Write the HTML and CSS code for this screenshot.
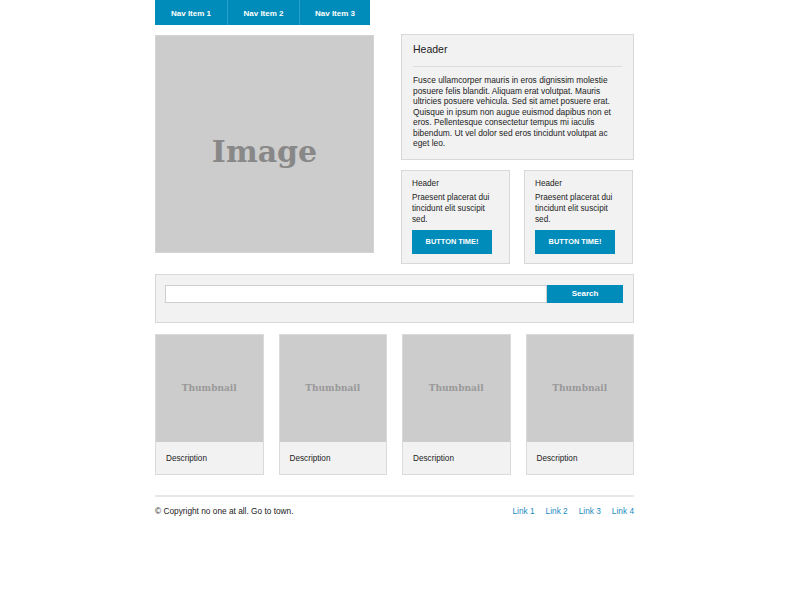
FILE: index.html
```html
<!DOCTYPE html>
<html>
<head>
<meta charset="utf-8">
<link rel="stylesheet" href="styles.css">
</head>
<body>
<div class="page">
  <nav class="nav">
    <a class="nav-item">Nav Item 1</a>
    <a class="nav-item">Nav Item 2</a>
    <a class="nav-item">Nav Item 3</a>
  </nav>

  <div class="top-row">
    <div class="hero"><span>Image</span></div>
    <div class="side">
      <div class="panel main-panel">
        <h2 class="panel-title">Header</h2>
        <hr class="panel-rule">
        <p class="panel-text">Fusce ullamcorper mauris in eros dignissim molestie posuere felis blandit. Aliquam erat volutpat. Mauris ultricies posuere vehicula. Sed sit amet posuere erat. Quisque in ipsum non augue euismod dapibus non et eros. Pellentesque consectetur tempus mi iaculis bibendum. Ut vel dolor sed eros tincidunt volutpat ac eget leo.</p>
      </div>
      <div class="cards">
        <div class="panel card">
          <h3 class="card-title">Header</h3>
          <p class="card-text">Praesent placerat dui tincidunt elit suscipit sed.</p>
          <a class="btn">BUTTON TIME!</a>
        </div>
        <div class="panel card">
          <h3 class="card-title">Header</h3>
          <p class="card-text">Praesent placerat dui tincidunt elit suscipit sed.</p>
          <a class="btn">BUTTON TIME!</a>
        </div>
      </div>
    </div>
  </div>

  <div class="panel search">
    <div class="search-field"></div>
    <a class="search-btn">Search</a>
  </div>

  <div class="thumbs">
    <div class="thumb"><div class="thumb-img"><span>Thumbnail</span></div><div class="thumb-desc">Description</div></div>
    <div class="thumb"><div class="thumb-img"><span>Thumbnail</span></div><div class="thumb-desc">Description</div></div>
    <div class="thumb"><div class="thumb-img"><span>Thumbnail</span></div><div class="thumb-desc">Description</div></div>
    <div class="thumb"><div class="thumb-img"><span>Thumbnail</span></div><div class="thumb-desc">Description</div></div>
  </div>

  <footer class="footer">
    <span class="copy">© Copyright no one at all. Go to town.</span>
    <div class="links">
      <a class="link">Link 1</a>
      <a class="link">Link 2</a>
      <a class="link">Link 3</a>
      <a class="link">Link 4</a>
    </div>
  </footer>
</div>
</body>
</html>
```

FILE: styles.css
```css
html, body {
  margin: 0;
  padding: 0;
  background: #fff;
}
body {
  font-family: "Liberation Sans", Arial, sans-serif;
  color: #222;
}
.page {
  width: 479px;
  margin-left: 155px;
}
.nav {
  display: flex;
  height: 25px;
  width: 215px;
  background: #008cba;
}
.nav-item {
  width: 72px;
  display: flex;
  align-items: center;
  justify-content: center;
  padding-top: 1px;
  color: #fff;
  font-size: 8px;
  font-weight: bold;
  border-left: 1px solid #2a9fcc;
  box-sizing: border-box;
}
.nav-item:first-child {
  border-left: none;
}
.nav-item:last-child {
  width: 71px;
}
.top-row {
  display: flex;
  gap: 27px;
  margin-top: 9px;
}
.hero {
  width: 219px;
  height: 218px;
  margin-top: 1px;
  background: #cccccc;
  border: 1px solid #d4d4d4;
  box-sizing: border-box;
  display: flex;
  align-items: center;
  justify-content: center;
}
.hero span {
  font-family: "DejaVu Serif", serif;
  font-weight: bold;
  font-size: 30px;
  color: #888;
  padding-top: 14px;
}
.side {
  width: 233px;
  display: flex;
  flex-direction: column;
  gap: 10px;
}
.panel {
  background: #f2f2f2;
  border: 1px solid #d8d8d8;
  box-sizing: border-box;
}
.main-panel {
  padding: 8px 11px 10px 11px;
}
.panel-title {
  margin: 0;
  font-size: 10.5px;
  line-height: 13px;
  font-weight: normal;
  color: #222;
}
.panel-rule {
  border: none;
  border-top: 1px solid #dcdcdc;
  margin: 10px 0 0 0;
  height: 0;
}
.panel-text {
  margin: 8px 0 0 0;
  font-size: 8.4px;
  line-height: 10.5px;
  color: #222;
}
.cards {
  display: flex;
  gap: 14px;
}
.card {
  width: 109px;
  padding: 8px 10px 9px 10px;
}
.card-title {
  margin: 0;
  font-size: 8.2px;
  line-height: 10px;
  font-weight: normal;
}
.card-text {
  margin: 3px 0 0 0;
  font-size: 8.2px;
  line-height: 11px;
}
.btn {
  display: flex;
  align-items: center;
  justify-content: center;
  margin-top: 5px;
  width: 80px;
  height: 24px;
  background: #008cba;
  color: #fff;
  font-size: 7.4px;
  font-weight: bold;
}
.search {
  margin-top: 10px;
  display: flex;
  align-items: flex-start;
  padding: 10px 10px 19px 9px;
}
.search-field {
  flex: 1;
  height: 18px;
  background: #fff;
  border: 1px solid #cfcfcf;
  box-sizing: border-box;
}
.search-btn {
  width: 76px;
  height: 18px;
  background: #008cba;
  color: #fff;
  font-size: 8px;
  font-weight: bold;
  display: flex;
  align-items: center;
  justify-content: center;
}
.thumbs {
  margin-top: 11px;
  display: grid;
  grid-template-columns: repeat(4, 1fr);
  column-gap: 15px;
}
.thumb {
  border: 1px solid #dadada;
  background: #f2f2f2;
}
.thumb-img {
  height: 107px;
  background: #cccccc;
  display: flex;
  align-items: center;
  justify-content: center;
}
.thumb-img span {
  font-family: "DejaVu Serif", serif;
  font-weight: bold;
  font-size: 9px;
  color: #999;
}
.thumb-desc {
  height: 32px;
  padding-left: 10px;
  display: flex;
  align-items: center;
  font-size: 8.2px;
  padding-top: 2px;
  box-sizing: border-box;
}
.footer {
  margin-top: 20px;
  border-top: 2px solid #e8e8e8;
  padding-top: 9px;
  display: flex;
  justify-content: space-between;
  font-size: 8.3px;
  line-height: 10px;
}
.links {
  display: flex;
  gap: 11px;
}
.link {
  color: #1a8bbf;
}
```
